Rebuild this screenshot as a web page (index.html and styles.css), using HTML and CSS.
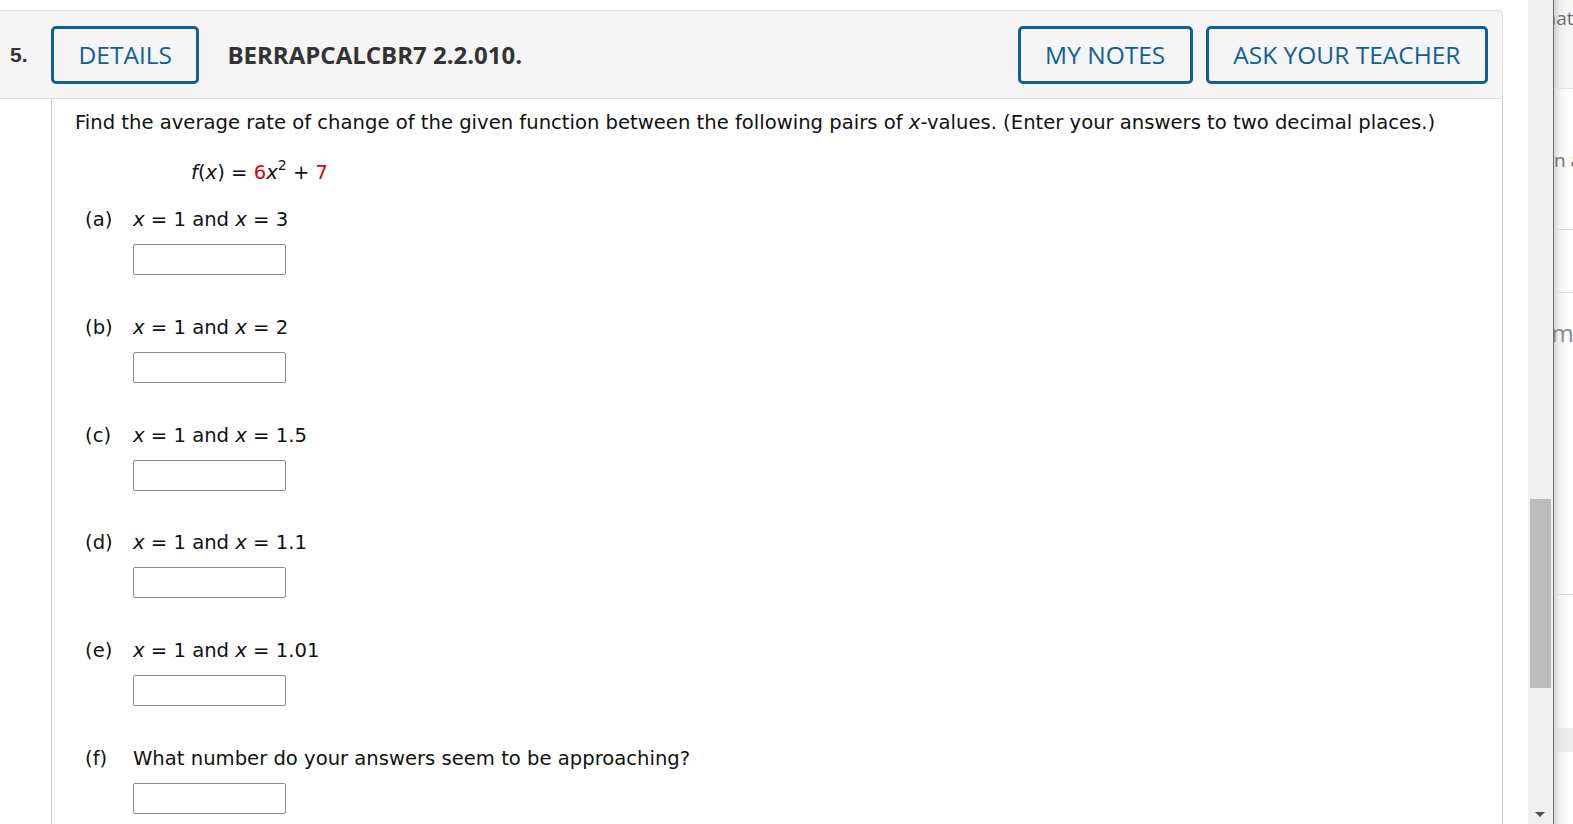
FILE: index.html
```html
<!DOCTYPE html>
<html lang="en">
<head>
<meta charset="utf-8">
<title>BERRAPCALCBR7 2.2.010.</title>
<link rel="stylesheet" href="styles.css">
</head>
<body>
<div class="page">
  <div class="main">
    <div class="question">
      <div class="qhead">
        <div class="qnum">5.</div>
        <button class="btn">DETAILS</button>
        <div class="qtitle">BERRAPCALCBR7 2.2.010.</div>
        <div class="spacer"></div>
        <button class="btn">MY NOTES</button>
        <button class="btn btn-ask">ASK YOUR TEACHER</button>
      </div>
      <div class="qbody">
        <p class="prompt">Find the average rate of change of the given function between the following pairs of <i>x</i>-values. (Enter your answers to two decimal places.)</p>
        <p class="formula"><i>f</i>(<i>x</i>) = <span class="red">6</span><i>x</i><sup>2</sup> + <span class="red">7</span></p>
        <div class="part">
          <div class="prow"><span class="plabel">(a)</span><span class="ptext"><i>x</i> = 1 and <i>x</i> = 3</span></div>
          <div class="answer"></div>
        </div>
        <div class="part">
          <div class="prow"><span class="plabel">(b)</span><span class="ptext"><i>x</i> = 1 and <i>x</i> = 2</span></div>
          <div class="answer"></div>
        </div>
        <div class="part">
          <div class="prow"><span class="plabel">(c)</span><span class="ptext"><i>x</i> = 1 and <i>x</i> = 1.5</span></div>
          <div class="answer"></div>
        </div>
        <div class="part">
          <div class="prow"><span class="plabel">(d)</span><span class="ptext"><i>x</i> = 1 and <i>x</i> = 1.1</span></div>
          <div class="answer"></div>
        </div>
        <div class="part">
          <div class="prow"><span class="plabel">(e)</span><span class="ptext"><i>x</i> = 1 and <i>x</i> = 1.01</span></div>
          <div class="answer"></div>
        </div>
        <div class="part">
          <div class="prow"><span class="plabel">(f)</span><span class="ptext">What number do your answers seem to be approaching?</span></div>
          <div class="answer"></div>
        </div>
      </div>
    </div>
  </div>
  <div class="scrollbar">
    <div class="thumb"></div>
    <div class="arrow-down"></div>
  </div>
  <div class="side">
    <div class="side-head"><span class="frag frag-top">Informatic</span></div>
    <div class="side-sec1"><span class="frag frag-a">Learn a</span></div>
    <div class="side-sec2"></div>
    <div class="side-sec3"><span class="frag frag-m">Term</span></div>
    <div class="side-sec4"></div>
    <div class="side-band"></div>
    <div class="side-sec5"></div>
  </div>
</div>
</body>
</html>
```

FILE: styles.css
```css
html, body {
  margin: 0;
  padding: 0;
  background: #ffffff;
  overflow: hidden;
}

.page {
  display: flex;
  width: 1573px;
  height: 824px;
  overflow: hidden;
}

.main {
  width: 1528px;
  flex: none;
  padding-top: 10px;
  box-sizing: border-box;
}

.question {
  margin-right: 25px;
}

.qhead {
  height: 87px;
  display: flex;
  align-items: center;
  background: #f5f5f5;
  border-top: 1px solid #dedede;
  border-bottom: 1px solid #dedede;
  border-right: 1px solid #dedede;
  border-top-right-radius: 4px;
  padding-left: 10px;
  padding-right: 14px;
}

.qnum {
  width: 41px;
  font-family: "Liberation Sans", Arial, sans-serif;
  font-weight: 700;
  font-size: 21px;
  color: #333333;
}

.btn {
  height: 58px;
  box-sizing: border-box;
  border: 3px solid #0f5f98;
  border-radius: 5px;
  background: #f5f5f5;
  color: #0f5f98;
  font-family: "Open Sans", sans-serif;
  font-size: 24.5px;
  font-weight: 500;
  padding: 0 24.5px;
  margin: 0;
}

.btn-ask {
  margin-left: 13px;
}

.qtitle {
  margin-left: 28px;
  font-family: "Open Sans", sans-serif;
  font-weight: 700;
  font-size: 24px;
  color: #333333;
}

.spacer {
  flex: 1;
}

.qbody {
  margin-left: 51px;
  border-left: 1px solid #cccccc;
  border-right: 1px solid #cccccc;
  padding: 12px 0 0 23px;
  height: 740px;
  font-family: "DejaVu Sans", Verdana, sans-serif;
  font-size: 19.6px;
  line-height: 24px;
  color: #111111;
}

.prompt {
  margin: 0;
}

.formula {
  margin: 26px 0 0 116px;
}

.formula sup {
  font-size: 14px;
  line-height: 0;
  vertical-align: 9px;
}

.red {
  color: #e00000;
}

.part {
  margin-left: 10px;
}

.formula + .part {
  margin-top: 23px;
}

.part + .part {
  margin-top: 40.8px;
}

.prow {
  display: flex;
}

.plabel {
  width: 48px;
  flex: none;
}

.answer {
  margin: 12px 0 0 48px;
  width: 153px;
  height: 31px;
  box-sizing: border-box;
  border: 1px solid #8c8c8c;
  border-radius: 2px;
  background: #ffffff;
}

.scrollbar {
  width: 25px;
  flex: none;
  background: #f0f0f0;
  position: relative;
}

.thumb {
  position: absolute;
  left: 2px;
  top: 499px;
  width: 21px;
  height: 189px;
  background: #bcbcbc;
}

.arrow-down {
  position: absolute;
  left: 7px;
  top: 812px;
  width: 0;
  height: 0;
  border-left: 5px solid transparent;
  border-right: 5px solid transparent;
  border-top: 5px solid #505050;
}

.side {
  flex: 1;
  border-left: 1px solid #6b6b6b;
  overflow: hidden;
  background: linear-gradient(to right, #d6d6d6 0px, #f2f2f2 6px, #ffffff 14px);
  font-family: "Open Sans", sans-serif;
  color: #6e6e6e;
}

.side > div {
  white-space: nowrap;
  box-sizing: border-box;
}

.frag {
  display: block;
}

.side-head {
  height: 89px;
  padding-top: 6px;
  border-bottom: 1px solid #e0e0e0;
  background: linear-gradient(to right, #d0d0d0 0px, #ededed 6px, #f6f6f6 14px);
}

.frag-top {
  font-size: 19px;
  line-height: 24px;
  margin-left: -58px;
}

.side-sec1 {
  height: 141px;
  padding-top: 59px;
  border-bottom: 1px solid #dcdcdc;
}

.frag-a {
  font-size: 19px;
  line-height: 24px;
  margin-left: -39px;
}

.side-sec2 {
  height: 63px;
  border-bottom: 1px solid #dcdcdc;
}

.frag-m {
  font-size: 24px;
  line-height: 28px;
  margin-left: -39px;
  color: #8a8a8a;
}

.side-sec3 {
  height: 302px;
  padding-top: 26px;
  border-bottom: 1px solid #dcdcdc;
}

.side-sec4 {
  height: 133px;
}

.side-band {
  height: 24px;
  background: linear-gradient(to right, #d6d6d6 0px, #e6e6e6 6px, #ececec 14px);
}

.side-sec5 {
  height: 80px;
}
```
